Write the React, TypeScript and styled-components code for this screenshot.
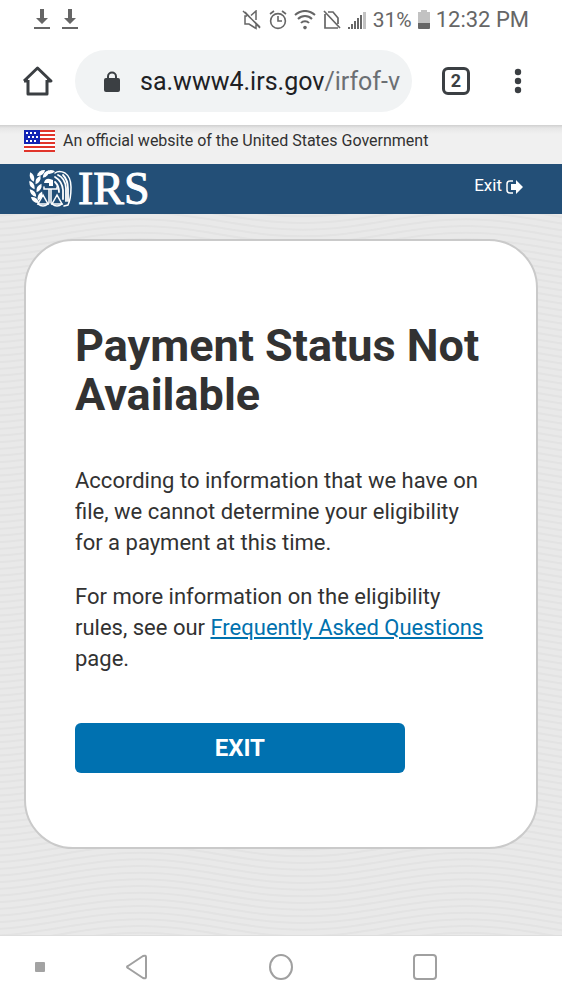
import React from "react";
import styled, { createGlobalStyle } from "styled-components";

const GlobalStyle = createGlobalStyle`
  *, *::before, *::after { box-sizing: border-box; }
  html, body, #root { margin: 0; height: 100%; }
  body { background: #fff; color: #323232; font-family: Roboto, "Liberation Sans", sans-serif; }
  button { font: inherit; color: inherit; border: 0; padding: 0; background: none; cursor: pointer; }
`;

const waveLines = [-2, -1, 0, 1, 2, 3, 4]
  .map((n) => (n * 20) / 3)
  .map((y) => `<path d="M-5 ${y + 9}H0C60 ${y + 9} 105 ${y - 8} 163 ${y - 8}S266 ${y + 9} 326 ${y + 9}H331"/>`)
  .join("");
const waves = `url("data:image/svg+xml,${encodeURIComponent(
  `<svg xmlns="http://www.w3.org/2000/svg" width="326" height="20"><g fill="none" stroke="#e3e3e3" stroke-width="2">${waveLines}</g></svg>`
)}")`;

const Screen = styled.div`
  display: flex;
  flex-direction: column;
  min-height: 100%;
`;

const StatusBar = styled.header`
  display: flex;
  align-items: center;
  justify-content: space-between;
  height: 40px;
  padding: 0 33px;
  color: #666;
`;

const StatusGroup = styled.div<{ $gap: number }>`
  display: flex;
  align-items: center;
  gap: ${(p) => p.$gap}px;
`;

const StatusText = styled.span<{ $size: number }>`
  font-size: ${(p) => p.$size}px;
  line-height: 40px;
  white-space: nowrap;
`;

const BrowserBar = styled.nav`
  display: flex;
  align-items: center;
  height: 85px;
  padding: 0 40px 3px 21px;
  color: #3b3f43;
`;

const IconButton = styled.button`
  display: flex;
  flex: none;
`;

const AddressBar = styled.div`
  display: flex;
  flex: 1;
  min-width: 0;
  align-items: center;
  gap: 19px;
  height: 62px;
  margin: 0 30px 0 21px;
  padding: 2px 6px 0 28px;
  border-radius: 31px;
  background: #f1f3f4;
`;

const Address = styled.span`
  color: #202124;
  font-size: 25px;
  line-height: 32px;
  white-space: nowrap;
`;

const AddressPath = styled.span`
  color: #6b6f73;
`;

const TabCount = styled.button`
  flex: none;
  width: 28px;
  height: 28px;
  margin-right: 44px;
  && {
    border: 3px solid #3b3f43;
    font-size: 18px;
    font-weight: 700;
    line-height: 22px;
  }
  border-radius: 6px;
`;

const Notice = styled.div`
  display: flex;
  align-items: center;
  gap: 8px;
  height: 39px;
  padding: 0 24px 8px;
  background: linear-gradient(#cfcfcf, #e6e6e6 3px, #f0f0f0 9px);
  font-size: 16px;
  line-height: 24px;
`;

const SiteHeader = styled.header`
  display: flex;
  align-items: center;
  justify-content: space-between;
  height: 50px;
  padding: 0 39px 0 29px;
  background: #234f77;
  color: #fff;
`;

const Brand = styled.a`
  display: flex;
  align-items: center;
  gap: 5px;
  color: inherit;
  text-decoration: none;
`;

const BrandName = styled.span`
  font-family: "Liberation Serif", serif;
  font-size: 46px;
  line-height: 50px;
  -webkit-text-stroke: 1px currentColor;
`;

const ExitLink = styled.a`
  display: flex;
  align-items: center;
  gap: 4px;
  padding-bottom: 8px;
  color: inherit;
  font-size: 17px;
  line-height: 24px;
  text-decoration: none;
  svg { margin-top: 4px; }
`;

const Main = styled.main`
  flex: 1;
  padding: 25px 24px 85px;
  background: #e9e9e9 ${waves} -23px 0;
`;

const Card = styled.section`
  padding: 80px 49px 74px;
  border: 2px solid #cacaca;
  border-radius: 49px;
  background: #fff;
`;

const Title = styled.h1`
  margin: 0 0 46px;
  font-size: 45px;
  font-weight: 700;
  line-height: 49px;
`;

const Copy = styled.p`
  margin: 0 0 23px;
  font-size: 22px;
  line-height: 31px;
`;

const TextLink = styled.a`
  color: #0071ae;
  text-decoration: underline;
`;

const ExitButton = styled.button`
  display: block;
  width: 80%;
  height: 50px;
  margin-top: 49px;
  && {
    background: #0071b0;
    color: #fff;
    font-size: 24px;
    font-weight: 700;
  }
  border-radius: 6px;
`;

const SystemNav = styled.nav`
  display: grid;
  grid-template-columns: 80fr 114fr 174fr 114fr 80fr;
  height: 64px;
  padding-bottom: 2px;
  border-top: 1px solid #dedede;
`;

const NavButton = styled.button`
  display: flex;
  align-items: center;
  justify-content: center;
`;

const DownloadIcon = () => (
  <svg width="18" height="22" viewBox="0 0 18 22" fill="currentColor" aria-hidden="true">
    <path d="M7 0h4v9h4l-6 6-6-6h4zM1 18h16v2H1z" />
  </svg>
);

const MuteIcon = () => (
  <svg width="20" height="20" viewBox="0 0 20 20" fill="none" stroke="currentColor" strokeWidth="1.5" aria-hidden="true">
    <path d="M5 6H3v8h4l7 4.500v-4M9 5.500 14 1v9M1 1l17 16M3 2l15 16" />
  </svg>
);

const AlarmIcon = () => (
  <svg width="18" height="20" viewBox="0 0 18 20" fill="none" stroke="currentColor" strokeWidth="1.6" aria-hidden="true">
    <circle cx="9" cy="11" r="7.4" />
    <path d="M9 6v5h4M1 4l4-3M17 4l-4-3" />
  </svg>
);

const WifiIcon = () => (
  <svg width="22" height="20" viewBox="0 0 22 20" fill="none" stroke="currentColor" strokeWidth="2" aria-hidden="true">
    <path d="M1 5C7-.4 15-.4 21 5M4 9c4-4 10-4 14 0M7 13c2-2.5 6-2.5 8 0" />
    <circle cx="11" cy="17.6" r="1.8" fill="currentColor" stroke="none" />
  </svg>
);

const NoSimIcon = () => (
  <svg width="18" height="20" viewBox="0 0 18 20" fill="none" stroke="currentColor" strokeWidth="1.7" aria-hidden="true">
    <path d="M1 1l16 17M2 4v14h13M5 2h5l5 6v6" />
  </svg>
);

const SignalIcon = () => (
  <svg width="20" height="20" viewBox="0 0 20 20" fill="currentColor" aria-hidden="true">
    <path d="M1 17h2v2H1zM4 14h2v5H4zM7 11h2v8H7zM10 8h2v11h-2zM13 5h2v14h-2z" />
    <path d="M16 2h3v17h-3z" opacity=".4" />
  </svg>
);

const BatteryIcon = () => (
  <svg width="12" height="20" viewBox="0 0 12 20" aria-hidden="true">
    <path d="M3 0h6v2h3v12H0V2h3z" fill="#c2c2c2" />
    <path d="M0 13h12v5q0 1-1 1H1q-1 0-1-1z" fill="currentColor" />
  </svg>
);

const HomeIcon = () => (
  <svg width="33" height="32" viewBox="0 0 33 32" fill="none" stroke="currentColor" strokeWidth="3" strokeLinejoin="round" aria-hidden="true">
    <path d="M7 15v14h19V15M3 16 16.500 3 30 16H26M3 16H7" />
  </svg>
);

const LockIcon = () => (
  <svg width="18" height="22" viewBox="0 0 18 22" aria-hidden="true">
    <path d="M5 9V5.500a4 4 0 0 1 8 0V9" fill="none" stroke="currentColor" strokeWidth="2" />
    <rect x="1" y="7" width="16" height="14" rx="2" fill="currentColor" />
  </svg>
);

const MoreIcon = () => (
  <svg width="8" height="28" viewBox="0 0 8 28" fill="currentColor" aria-hidden="true">
    <circle cx="4" cy="5" r="3.200" />
    <circle cx="4" cy="14" r="3.200" />
    <circle cx="4" cy="23" r="3.200" />
  </svg>
);

const stars = [
  [3, 3], [7, 3], [11, 3],
  [5, 7], [9, 7], [13, 7],
  [3, 11], [7, 11], [11, 11],
];

const FlagIcon = () => (
  <svg width="31" height="22" viewBox="0 0 31 22" role="img" aria-label="United States flag">
    <path fill="#fff" d="M0 0h31v22H0z" />
    <path stroke="#e1352b" strokeWidth="2" d="M0 1h31M0 5h31M0 9h31M0 13h31M0 17h31M0 21h31" />
    <path fill="#1224b4" d="M0 0h16v14H0z" />
    {stars.map(([x, y]) => (
      <rect key={`${x}-${y}`} x={x - 1} y={y - 1} width="2" height="2" fill="#fff" />
    ))}
  </svg>
);

const leaves = [
  [3, 8, 70], [3, 16, 60], [4, 24, 50], [6, 31, 35],
  [9, 11, -60], [10, 19, -60], [11, 27, -65],
  [12, 4, -35], [17, 5, -50], [21, 3, -10],
];

const EagleMark = () => (
  <svg width="44" height="40" viewBox="0 0 44 40" aria-hidden="true">
    <g fill="currentColor">
      {leaves.map(([x, y, angle]) => (
        <path key={`${x}-${y}`} d="M-5 0Q0-4 5 0 0 4-5 0z" transform={`translate(${x} ${y}) rotate(${angle})`} />
      ))}
      <path d="M15 14q1-5 6-4l3 1v6h-4v-3h-5z" />
    </g>
    <g fill="none" stroke="currentColor" strokeWidth="1.500" strokeLinecap="round">
      <path d="M26 4Q30 1 36 4q6 4 6 14 0 12-3 18l-4 1" />
      <path d="M29 6q7 3 8 13v13M34 6q5 5 5 14v12M26 8q7 4 8 13v9M26 13q4 4 4 10" strokeWidth="1.800" />
      <path d="M15 18v2h13v-2M20 20v14M22 20v14M14 26l-5 9h10zM28 26l-5 9h10z" />
      <path d="M9 35q5 4 10 0M23 35q5 4 10 0" />
    </g>
  </svg>
);

const SignOutIcon = () => (
  <svg width="17" height="16" viewBox="0 0 17 16" aria-hidden="true">
    <path d="M7 2H4Q1 2 1 5v6q0 3 3 3h3" fill="none" stroke="currentColor" strokeWidth="1.5" />
    <path d="M5 5h5V1l7 7-7 7v-4H5z" fill="currentColor" />
  </svg>
);

export default function App() {
  return (
    <>
      <GlobalStyle />
      <Screen>
        <StatusBar>
          <StatusGroup $gap={10}>
            <DownloadIcon />
            <DownloadIcon />
          </StatusGroup>
          <StatusGroup $gap={6}>
            <StatusGroup $gap={7}>
              <MuteIcon />
              <AlarmIcon />
              <WifiIcon />
              <NoSimIcon />
            </StatusGroup>
            <SignalIcon />
            <StatusText $size={21}>31%</StatusText>
            <BatteryIcon />
            <StatusText $size={22}>12:32 PM</StatusText>
          </StatusGroup>
        </StatusBar>

        <BrowserBar aria-label="Browser">
          <IconButton type="button" aria-label="Home"><HomeIcon /></IconButton>
          <AddressBar>
            <LockIcon />
            <Address>sa.www4.irs.gov<AddressPath>/irfof-v</AddressPath></Address>
          </AddressBar>
          <TabCount type="button" aria-label="2 open tabs">2</TabCount>
          <IconButton type="button" aria-label="More options"><MoreIcon /></IconButton>
        </BrowserBar>

        <Notice>
          <FlagIcon />
          <span>An official website of the United States Government</span>
        </Notice>

        <SiteHeader>
          <Brand href="#home">
            <EagleMark />
            <BrandName>IRS</BrandName>
          </Brand>
          <ExitLink href="#exit">Exit <SignOutIcon /></ExitLink>
        </SiteHeader>

        <Main>
          <Card>
            <Title>Payment Status Not Available</Title>
            <Copy>
              According to information that we have on file, we cannot determine your
              eligibility for a payment at this time.
            </Copy>
            <Copy>
              For more information on the eligibility rules, see our{" "}
              <TextLink href="#faq">Frequently Asked Questions</TextLink> page.
            </Copy>
            <ExitButton type="button">EXIT</ExitButton>
          </Card>
        </Main>

        <SystemNav aria-label="System">
          <NavButton type="button" aria-label="Toggle navigation bar">
            <svg width="10" height="10" aria-hidden="true"><rect width="10" height="10" rx="1" fill="#a3a3a3" /></svg>
          </NavButton>
          <NavButton type="button" aria-label="Back">
            <svg width="24" height="26" viewBox="0 0 24 26" fill="none" stroke="#a0a0a0" strokeWidth="2" strokeLinejoin="round" aria-hidden="true">
              <path d="M3 12 18 2q3-1 3 1v20q0 2-3 1L3 14q-2-1 0-2z" />
            </svg>
          </NavButton>
          <NavButton type="button" aria-label="Home screen">
            <svg width="24" height="26" viewBox="0 0 24 26" fill="none" stroke="#a0a0a0" strokeWidth="2" aria-hidden="true">
              <ellipse cx="12" cy="13" rx="11" ry="12" />
            </svg>
          </NavButton>
          <NavButton type="button" aria-label="Recent apps">
            <svg width="24" height="26" viewBox="0 0 24 26" fill="none" stroke="#a0a0a0" strokeWidth="2" aria-hidden="true">
              <rect x="1" y="1" width="22" height="24" rx="3" />
            </svg>
          </NavButton>
        </SystemNav>
      </Screen>
    </>
  );
}
